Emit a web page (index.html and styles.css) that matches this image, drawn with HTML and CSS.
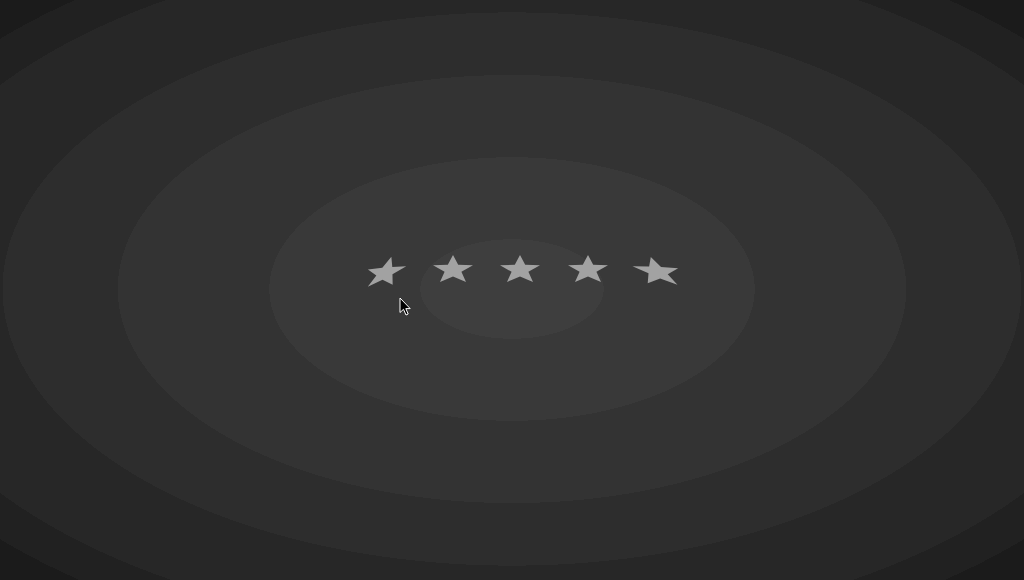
FILE: index.html
```html
<!DOCTYPE html>
<html>
<head>
<meta charset="utf-8">
<title>Rating</title>
<link rel="stylesheet" href="styles.css">
</head>
<body>
<main class="stage">
  <div class="rating">
    <svg class="star star-first" viewBox="0 0 40 28" width="40" height="28"><polygon points="20,0 25.2,9.8 40,10.3 28.4,16.8 33,27 20,21.4 7,27 11.6,16.8 0,10.3 14.8,9.8"/></svg>
    <svg class="star" viewBox="0 0 40 28" width="40" height="28"><polygon points="20,0 25.2,9.8 40,10.3 28.4,16.8 33,27 20,21.4 7,27 11.6,16.8 0,10.3 14.8,9.8"/></svg>
    <svg class="star" viewBox="0 0 40 28" width="40" height="28"><polygon points="20,0 25.2,9.8 40,10.3 28.4,16.8 33,27 20,21.4 7,27 11.6,16.8 0,10.3 14.8,9.8"/></svg>
    <svg class="star" viewBox="0 0 40 28" width="40" height="28"><polygon points="20,0 25.2,9.8 40,10.3 28.4,16.8 33,27 20,21.4 7,27 11.6,16.8 0,10.3 14.8,9.8"/></svg>
    <svg class="star star-last" viewBox="0 0 40 28" width="40" height="28"><polygon points="20,0 25.2,9.8 40,10.3 28.4,16.8 33,27 20,21.4 7,27 11.6,16.8 0,10.3 14.8,9.8"/></svg>
  </div>
  <svg class="cursor" viewBox="0 0 13 19" width="13" height="19"><path d="M1,1 L1,15.5 L4.5,12.3 L7,18 L9.2,17 L6.8,11.6 L11.2,11.6 Z"/></svg>
</main>
</body>
</html>
```
FILE: styles.css
```css
html, body {
  margin: 0;
  padding: 0;
  width: 1024px;
  height: 580px;
  overflow: hidden;
}

body {
  font-family: "Liberation Sans", Arial, sans-serif;
  background: radial-gradient(ellipse 512px 278px at 512px 289px,
    #3e3e3e 0 17.9%,
    #393939 17.9% 47.4%,
    #333333 47.4% 77%,
    #2d2d2d 77% 99.5%,
    #272727 99.5% 124%,
    #212121 124% 134.5%,
    #1b1b1b 134.5%);
}

.stage {
  position: relative;
  height: 580px;
  box-sizing: border-box;
  padding: 0 0 42px 16px;
  display: flex;
  align-items: center;
  justify-content: center;
}

.rating {
  display: flex;
  gap: 27.5px;
}

.star {
  display: block;
  overflow: visible;
  transform-origin: 20px 14.9px;
}

.star polygon {
  fill: #a2a2a2;
}

.star-first {
  transform: matrix(0.959, -0.084, -0.413, 1.07, 0.2, 2.9);
}

.star-last {
  transform: matrix(1.143, 0.053, 0.436, 1.0, 2.3, 2.0);
}

.cursor {
  position: absolute;
  left: 399px;
  top: 297px;
  overflow: visible;
}

.cursor path {
  fill: #000;
  stroke: #fff;
  stroke-width: 1;
  stroke-linejoin: miter;
}
```
